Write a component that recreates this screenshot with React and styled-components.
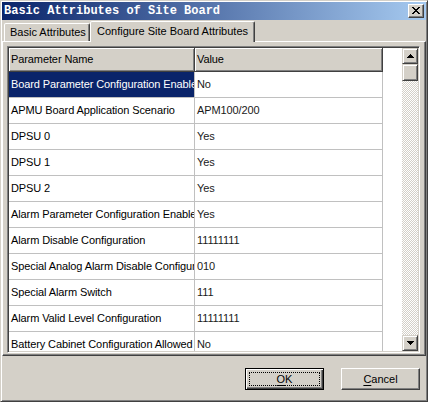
import React from "react";
import styled, { createGlobalStyle } from "styled-components";

const GlobalStyle = createGlobalStyle`
  html, body {
    margin: 0;
    padding: 0;
    background: #d4d0c8;
  }
  * {
    box-sizing: border-box;
  }
`;

const FACE = "#d4d0c8";

//전체 다이얼로그 창
const Window = styled.div`
  width: 428px;
  height: 402px;
  display: flex;
  flex-direction: column;
  background: ${FACE};
  border: 1px solid;
  border-color: ${FACE} #404040 #404040 ${FACE};
  box-shadow: inset 1px 1px #fff, inset -1px -1px #808080;
  padding: 1px;
  font-family: "Liberation Sans", Arial, sans-serif;
  font-size: 11px;
  color: #000;
`;

const TitleBar = styled.div`
  height: 18px;
  flex: none;
  display: flex;
  align-items: center;
  justify-content: space-between;
  padding: 0 2px 0 2px;
  background: linear-gradient(to right, #0a246a, #a6caf0);
`;

const TitleText = styled.span`
  color: #fff;
  font-family: "Liberation Mono", "Courier New", monospace;
  font-weight: bold;
  font-size: 12px;
  line-height: 18px;
  white-space: nowrap;
`;

const CloseButton = styled.div`
  width: 16px;
  height: 14px;
  display: flex;
  align-items: center;
  justify-content: center;
  background: ${FACE};
  border: 1px solid;
  border-color: #fff #404040 #404040 #fff;
  box-shadow: inset -1px -1px #808080;
  padding: 0 0 1px 0;
`;

const TabRow = styled.div`
  height: 21px;
  flex: none;
  display: flex;
  align-items: flex-start;
  padding-left: 2px;
  position: relative;
  z-index: 1;
`;

const Tab = styled.div`
  width: ${(p) => p.$width}px;
  height: ${(p) => (p.$active ? 21 : 18)}px;
  margin-top: ${(p) => (p.$active ? 1 : 3)}px;
  padding: ${(p) => (p.$active ? "3px 0 0 6px" : "2px 0 0 5px")};
  background: ${FACE};
  border: 1px solid;
  border-bottom: none;
  border-color: #fff #404040 transparent #fff;
  border-radius: 2px 2px 0 0;
  box-shadow: inset -1px 0 #808080;
  white-space: nowrap;
  line-height: 13px;
`;

const Panel = styled.div`
  height: 315px;
  flex: none;
  border: 1px solid;
  border-color: #fff #404040 #404040 #fff;
  box-shadow: inset -1px -1px #808080;
  padding: 4px 3px 2px 4px;
`;

//리스트 (sunken)
const Grid = styled.div`
  width: 413px;
  height: 307px;
  display: flex;
  border: 1px solid;
  border-color: #808080 #fff #fff #808080;
  box-shadow: inset 1px 1px #404040, inset -1px -1px ${FACE};
  padding: 1px;
  background: #fff;
`;

const TableArea = styled.div`
  flex: 1;
  overflow: hidden;
  display: flex;
  flex-direction: column;
  letter-spacing: -0.1px;
`;

const HeaderRow = styled.div`
  display: flex;
  height: 24px;
  flex: none;
`;

const HeaderCell = styled.div`
  width: ${(p) => p.$width}px;
  height: 24px;
  background: ${FACE};
  border-right: 1px solid #404040;
  border-bottom: 1px solid #404040;
  box-shadow: inset 1px 1px #fff, inset -1px -1px #808080;
  padding: 0 0 0 2px;
  line-height: 23px;
  white-space: nowrap;
  overflow: hidden;
`;

const Row = styled.div`
  display: flex;
  height: 26px;
  flex: none;
`;

const Cell = styled.div`
  width: ${(p) => p.$width}px;
  height: 26px;
  flex: none;
  padding: 0 0 0 2px;
  line-height: 24px;
  border-right: 1px solid #c0c0c0;
  border-bottom: 1px solid #c0c0c0;
  background: ${(p) => (p.$selected ? "#0a246a" : "#fff")};
  color: ${(p) => (p.$selected ? "#fff" : p.$value ? "#1a1a1a" : "#000")};
  white-space: nowrap;
  overflow: hidden;
`;

const ScrollBar = styled.div`
  width: 16px;
  flex: none;
  display: flex;
  flex-direction: column;
  background-color: #fff;
  background-image: conic-gradient(
    ${FACE} 25%,
    #fff 0 50%,
    ${FACE} 0 75%,
    #fff 0
  );
  background-size: 2px 2px;
`;

const ScrollButton = styled.div`
  width: 16px;
  height: ${(p) => p.$height || 16}px;
  flex: none;
  display: flex;
  align-items: center;
  justify-content: center;
  background: ${FACE};
  border: 1px solid;
  border-color: ${FACE} #404040 #404040 ${FACE};
  box-shadow: inset 1px 1px #fff, inset -1px -1px #808080;
`;

const Track = styled.div`
  flex: 1;
`;

const Footer = styled.div`
  flex: 1;
  display: flex;
  justify-content: flex-end;
  align-items: flex-start;
  gap: 17px;
  padding: 12px 6px 0 0;
`;

const Button = styled.div`
  width: 79px;
  height: 22px;
  display: flex;
  align-items: center;
  justify-content: center;
  background: ${FACE};
  border: 1px solid;
  border-color: ${(p) =>
    p.$default ? "#000" : `#fff #404040 #404040 #fff`};
  box-shadow: ${(p) =>
    p.$default
      ? "inset 1px 1px #fff, inset -1px -1px #404040, inset -2px -2px #808080"
      : "inset -1px -1px #808080"};
  position: relative;
  font-size: 11px;
  u {
    text-decoration: underline;
    text-underline-offset: 2px;
  }
`;

const FocusRing = styled.div`
  position: absolute;
  inset: 3px;
  border: 1px dotted #000;
`;

const rows = [
  ["Board Parameter Configuration Enabled", "No"],
  ["APMU Board Application Scenario", "APM100/200"],
  ["DPSU 0", "Yes"],
  ["DPSU 1", "Yes"],
  ["DPSU 2", "Yes"],
  ["Alarm Parameter Configuration Enabled", "Yes"],
  ["Alarm Disable Configuration", "11111111"],
  ["Special Analog Alarm Disable Configuration", "010"],
  ["Special Alarm Switch", "111"],
  ["Alarm Valid Level Configuration", "11111111"],
  ["Battery Cabinet Configuration Allowed", "No"],
];

function CloseGlyph() {
  return (
    <svg width="8" height="7" viewBox="0 0 8 7" shapeRendering="crispEdges">
      <path
        fill="#000"
        d="M0 0h2v1H0zM6 0h2v1H6zM1 1h2v1H1zM5 1h2v1H5zM2 2h4v1H2zM3 3h2v1H3zM2 4h4v1H2zM1 5h2v1H1zM5 5h2v1H5zM0 6h2v1H0zM6 6h2v1H6z"
      />
    </svg>
  );
}

function Arrow({ down }) {
  return (
    <svg width="7" height="4" viewBox="0 0 7 4" shapeRendering="crispEdges">
      <path
        fill="#000"
        d={down ? "M0 0h7v1H0zM1 1h5v1H1zM2 2h3v1H2zM3 3h1v1H3z" : "M3 0h1v1H3zM2 1h3v1H2zM1 2h5v1H1zM0 3h7v1H0z"}
      />
    </svg>
  );
}

export default function App() {
  return (
    <>
      <GlobalStyle />
      <Window>
        <TitleBar>
          <TitleText>Basic Attributes of Site Board</TitleText>
          <CloseButton>
            <CloseGlyph />
          </CloseButton>
        </TitleBar>
        <TabRow>
          <Tab $width={86}>Basic Attributes</Tab>
          <Tab $width={165} $active>
            Configure Site Board Attributes
          </Tab>
        </TabRow>
        <Panel>
          <Grid>
            <TableArea>
              <HeaderRow>
                <HeaderCell $width={186}>Parameter Name</HeaderCell>
                <HeaderCell $width={188}>Value</HeaderCell>
              </HeaderRow>
              {rows.map(([name, value], i) => (
                <Row key={name}>
                  <Cell $width={186} $selected={i === 0}>
                    {name}
                  </Cell>
                  <Cell $width={188} $value>
                    {value}
                  </Cell>
                </Row>
              ))}
            </TableArea>
            <ScrollBar>
              <ScrollButton>
                <Arrow />
              </ScrollButton>
              <ScrollButton $height={17} />
              <Track />
              <ScrollButton>
                <Arrow down />
              </ScrollButton>
            </ScrollBar>
          </Grid>
        </Panel>
        <Footer>
          <Button $default>
            <FocusRing />
            <span>
              <u>O</u>K
            </span>
          </Button>
          <Button>
            <span>
              <u>C</u>ancel
            </span>
          </Button>
        </Footer>
      </Window>
    </>
  );
}
